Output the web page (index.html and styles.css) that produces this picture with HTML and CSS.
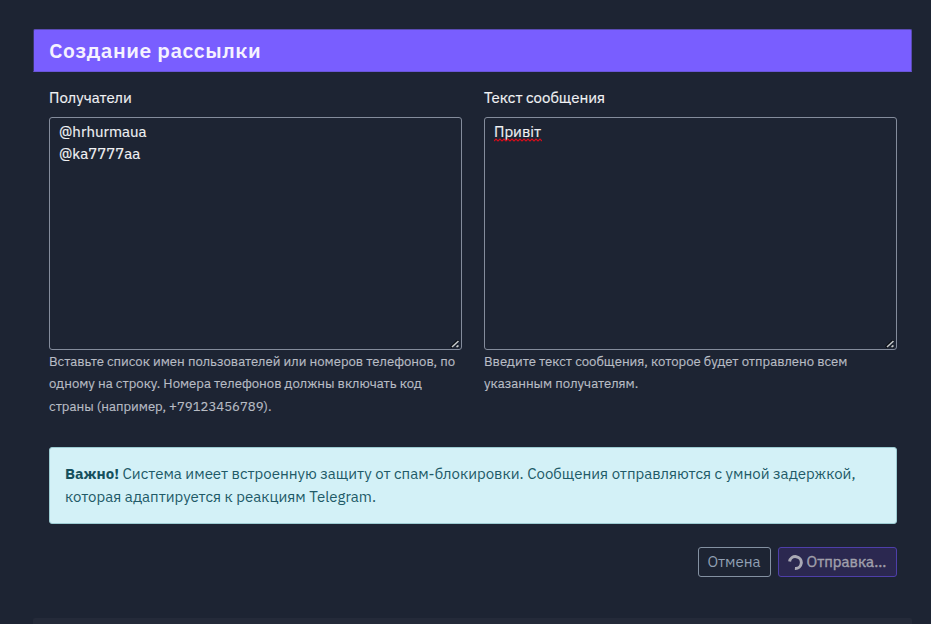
FILE: index.html
```html
<!DOCTYPE html>
<html lang="ru">
<head>
<meta charset="utf-8">
<title>Создание рассылки</title>
<link rel="stylesheet" href="styles.css">
</head>
<body>
<main class="page">
  <section class="card">
    <header class="card-header"><h1 class="title">Создание рассылки</h1></header>
    <div class="card-body">
      <div class="fields">
        <div class="field">
          <div class="label">Получатели</div>
          <div class="control" role="textbox">
            <div class="entry">@hrhurmaua</div>
            <div class="entry">@ka7777aa</div>
            <svg class="grip" viewBox="0 0 10 8"><path d="M1 7.5 8.5 0M6.5 7.5 8.5 5.5" class="grip-shade"/><path d="M2 7 8.5 1M6.5 7 8.5 5.5" class="grip-line"/></svg>
          </div>
          <p class="help">Вставьте список имен пользователей или номеров телефонов, по<br>одному на строку. Номера телефонов должны включать код<br>страны (например, +79123456789).</p>
        </div>
        <div class="field">
          <div class="label">Текст сообщения</div>
          <div class="control" role="textbox">
            <div class="entry"><span class="misspelled">Привіт<svg class="squiggle" viewBox="0 0 48 4"><path d="M0 3 2 1 4 3 6 1 8 3 10 1 12 3 14 1 16 3 18 1 20 3 22 1 24 3 26 1 28 3 30 1 32 3 34 1 36 3 38 1 40 3 42 1 44 3 46 1 48 3"/></svg></span></div>
            <svg class="grip" viewBox="0 0 10 8"><path d="M1 7.5 8.5 0M6.5 7.5 8.5 5.5" class="grip-shade"/><path d="M2 7 8.5 1M6.5 7 8.5 5.5" class="grip-line"/></svg>
          </div>
          <p class="help">Введите текст сообщения, которое будет отправлено всем<br>указанным получателям.</p>
        </div>
      </div>
      <div class="alert"><strong>Важно!</strong> Система имеет встроенную защиту от спам-блокировки. Сообщения отправляются с умной задержкой,<br>которая адаптируется к реакциям Telegram.</div>
      <div class="actions">
        <button class="btn cancel">Отмена</button>
        <button class="btn send" disabled><svg class="spinner" viewBox="0 0 16 16"><path d="M1.7 7A6.3 6.3 0 1 1 7.4 14.3"/></svg><span>Отправка...</span></button>
      </div>
    </div>
  </section>
  <section class="next-card"></section>
</main>
</body>
</html>
```
FILE: styles.css
```css
* { box-sizing: border-box; }
html, body { margin: 0; height: 624px; overflow: hidden; }
body { background: #1d2433; color: #f1f2f5; font-family: "IBM Plex Sans", Roboto, "Liberation Sans", sans-serif; font-size: 15px; }
.page { padding: 29px 19px 0 33px; }
.card { height: 589px; }
.card-header { height: 43px; padding: 0 15px 2px; display: flex; align-items: center; background: #795eff; border: 1px solid #5a4bb3; border-left-color: #3b3770; border-bottom-color: #6a56d9; border-radius: 2px 2px 0 0; }
.title { margin: 0; font-size: 21px; line-height: 24px; font-weight: 600; letter-spacing: .55px; color: #f5f2ff; }
.card-body { padding: 15px 15px 0 16px; }
.fields { display: grid; grid-template-columns: 413px 413px; gap: 22px; height: 331px; }
.label { height: 30px; line-height: 22px; white-space: nowrap; }
.control { position: relative; height: 233px; border: 1px solid #848c9c; border-radius: 3px; padding: 3px 9px; }
.entry { height: 22px; line-height: 22px; }
.label, .entry { -webkit-text-stroke: .15px; }
.misspelled { position: relative; display: inline-block; }
.squiggle { position: absolute; left: 0; top: 17px; width: 48px; height: 4px; fill: none; stroke: #d40e1b; stroke-width: 1.1; }
.grip { position: absolute; right: 1px; bottom: 1px; width: 10px; height: 8px; fill: none; }
.grip-shade { stroke: #080b10; stroke-width: 2.5; }
.grip-line { stroke: #c4c8ca; stroke-width: 1.6; }
.help { margin: 1px 0 0; font-size: 13.14px; line-height: 22.4px; color: #b8bcc4; white-space: nowrap; -webkit-text-stroke: .15px; }
.alert { height: 77px; margin-top: 29px; padding: 14px 15px; border: 1px solid #9ccbd2; border-radius: 3px; background: #d3f1f7; color: #215a67; font-size: 15px; line-height: 23px; white-space: nowrap; }
.alert strong { color: #15505d; font-weight: 700; }
.actions { margin-top: 23px; display: flex; justify-content: flex-end; gap: 7px; }
.btn { height: 30px; padding: 0 1px 0 0; display: flex; align-items: center; justify-content: center; border-radius: 3px; font: 15px/22px "IBM Plex Sans", Roboto, "Liberation Sans", sans-serif; white-space: nowrap; }
.cancel { width: 73px; background: transparent; border: 1px solid #8491a2; color: #91a0b4; }
.send { width: 119px; gap: 4px; background: #2b2850; border: 1px solid #4e3faa; color: #a1a0ac; -webkit-text-stroke: .4px; }
.spinner { width: 15px; height: 15px; fill: none; stroke: #aaa9b5; stroke-width: 3.2; }
.next-card { height: 30px; background: #242a39; border-radius: 2px 2px 0 0; }
```
